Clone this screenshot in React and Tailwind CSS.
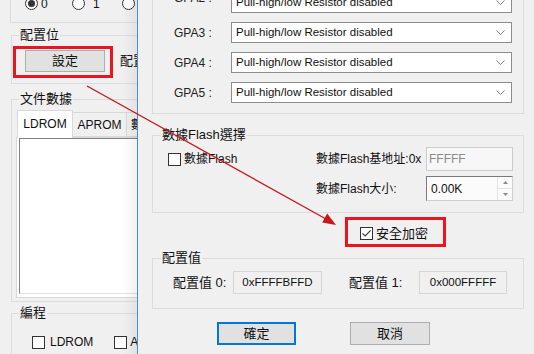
import React from "react";

const FONT = "font-['Liberation_Sans','Noto_Sans_CJK_TC',sans-serif]";

function Legend({ children, className = "" }) {
  return (
    <span
      className={`absolute top-[-9px] px-[1px] bg-[#f0f0f0] text-[13px] leading-[16px] text-[#111] whitespace-nowrap ${className}`}
    >
      {children}
    </span>
  );
}

function Checkbox({ checked }) {
  return (
    <span className="w-[13px] h-[13px] border border-[#333] bg-white flex items-center justify-center shrink-0">
      {checked && (
        <svg width="11" height="11" viewBox="0 0 11 11">
          <path d="M1.5 5.3 L4.2 8 L9.6 2.4" fill="none" stroke="#333" strokeWidth="1.1" />
        </svg>
      )}
    </span>
  );
}

function Radio({ checked }) {
  return (
    <span className="w-[13px] h-[13px] rounded-full border border-[#333] bg-white flex items-center justify-center shrink-0">
      {checked && <span className="w-[7px] h-[7px] rounded-full bg-[#333]" />}
    </span>
  );
}

function Select() {
  return (
    <div className="w-[281px] h-[21px] border border-[#8c8c8c] bg-white flex items-center pl-[4px] pr-[6px] text-[11.5px] text-[#111]">
      <span className="flex-1 whitespace-nowrap">Pull-high/low Resistor disabled</span>
      <svg width="9" height="5" viewBox="0 0 9 5">
        <path d="M0.5 0.5 L4.5 4.5 L8.5 0.5" fill="none" stroke="#808080" strokeWidth="1" />
      </svg>
    </div>
  );
}

function GpaRow({ label, labelClass = "" }) {
  return (
    <div className="flex items-center pl-[21px]">
      <span className={`w-[57px] text-[12px] text-[#222] whitespace-nowrap ${labelClass}`}>{label}</span>
      <Select />
    </div>
  );
}

export default function App() {
  return (
    <div className={`relative w-[534px] h-[354px] overflow-hidden bg-[#f0f0f0] ${FONT} text-[#111]`}>
      {/* Left (main) window */}
      <div className="absolute left-0 top-0 w-[137px] h-[354px] overflow-hidden bg-[#f0f0f0] flex flex-col">
        {/* radio group */}
        <div className="ml-[10px] mt-[-12px] w-[200px] h-[35px] shrink-0 border border-[#dcdcdc] flex items-center pl-[14px] pb-[4px] text-[12px]">
          <div className="w-[47px] flex items-center gap-[3px]">
            <Radio checked />
            <span>0</span>
          </div>
          <div className="w-[50px] flex items-center gap-[8px]">
            <Radio />
            <span>1</span>
          </div>
          <div className="flex items-center gap-[3px]">
            <Radio />
          </div>
        </div>

        {/* 配置位 */}
        <div className="relative ml-[11px] mt-[12px] w-[200px] shrink-0 border border-[#dcdcdc] pt-[14px] pl-[13px] pb-[11px]">
          <Legend className="left-[7px]">配置位</Legend>
          <div className="flex items-center">
            <div className="w-[80px] h-[22px] border border-[#adadad] bg-[#e1e1e1] flex items-center justify-center text-[13px]">
              設定
            </div>
            <span className="ml-[15px] text-[13px] whitespace-nowrap">配置值</span>
          </div>
        </div>

        {/* 文件數據 */}
        <div className="relative ml-[11px] mt-[15px] w-[200px] shrink-0 border border-[#dcdcdc] pt-[10px] pb-[3px]">
          <Legend className="left-[7px]">文件數據</Legend>
          <div className="flex items-start h-[27px] pl-[5px]">
            <div className="relative z-10 w-[56px] h-[28px] bg-white border border-b-0 border-[#d9d9d9] flex items-center justify-center text-[12px] pb-[2px]">
              LDROM
            </div>
            <div className="mt-[2px] w-[54px] h-[25px] bg-[#f0f0f0] border border-l-0 border-[#d9d9d9] flex items-center justify-center text-[12px]">
              APROM
            </div>
            <div className="mt-[2px] w-[54px] h-[25px] bg-[#f0f0f0] border border-l-0 border-[#d9d9d9] flex items-center pl-[4px] text-[12px] whitespace-nowrap">
              數據Flash
            </div>
          </div>
          <div className="ml-[4px] w-[190px] h-[161px] bg-white border border-[#d9d9d9] pl-[2px]">
            <div className="w-[180px] h-[156px] bg-white border-t border-l border-[#828282] border-b border-b-[#e3e3e3]" />
          </div>
        </div>

        {/* 編程 */}
        <div className="relative ml-[11px] mt-[11px] w-[200px] h-[60px] shrink-0 border border-[#dcdcdc] pt-[19px] pl-[20px]">
          <Legend className="left-[7px]">編程</Legend>
          <div className="flex items-center text-[12px]">
            <Checkbox />
            <span className="ml-[5px]">LDROM</span>
            <span className="ml-[21px]">
              <Checkbox />
            </span>
            <span className="ml-[3px]">APROM</span>
          </div>
        </div>

        {/* shadow cast by dialog */}
        <div className="absolute right-0 top-0 w-[14px] h-full bg-gradient-to-r from-transparent to-[rgba(0,0,0,0.06)]" />
      </div>

      {/* Dialog window */}
      <div className="absolute left-[137px] top-0 w-[397px] h-[354px] overflow-hidden border-l border-[#4a8fd6] bg-[#f0f0f0] flex flex-col pl-[14px]">
        {/* GPA group */}
        <div className="mt-[-20px] w-[372px] shrink-0 border border-[#dcdcdc] pt-[11px] pb-[10px] flex flex-col gap-[9px]">
          <GpaRow label="GPA2 :" labelClass="relative top-[-5px]" />
          <GpaRow label="GPA3 :" />
          <GpaRow label="GPA4 :" />
          <GpaRow label="GPA5 :" />
        </div>

        {/* 數據Flash選擇 */}
        <div className="relative mt-[21px] w-[372px] shrink-0 border border-[#dcdcdc] pt-[11px] pb-[11px] flex">
          <Legend className="left-[8px] text-[12px]">數據Flash選擇</Legend>
          <div className="w-[163px] h-[24px] pl-[15px] flex items-center">
            <Checkbox />
            <span className="ml-[3px] text-[12px] whitespace-nowrap">數據Flash</span>
          </div>
          <div className="flex flex-col gap-[5px]">
            <div className="flex items-center h-[24px]">
              <span className="w-[110px] text-[12px] whitespace-nowrap">數據Flash基地址:0x</span>
              <div className="w-[87px] h-[24px] border border-[#cccccc] bg-[#f7f7f7] flex items-center pl-[2px] text-[12px] text-[#8a8a8a]">
                FFFFF
              </div>
            </div>
            <div className="flex items-center h-[25px]">
              <span className="w-[110px] text-[12px] whitespace-nowrap">數據Flash大小:</span>
              <div className="w-[87px] h-[25px] border border-[#7a7a7a] border-r-[#cfcfcf] border-b-[#cfcfcf] bg-[#fbfbfb] flex items-center text-[12px]">
                <span className="flex-1 pl-[4px]">0.00K</span>
                <div className="w-[15px] h-full flex flex-col border-l border-[#e3e3e3]">
                  <div className="flex-1 flex items-center justify-center border-b border-[#e3e3e3]">
                    <svg width="5" height="3" viewBox="0 0 5 3">
                      <path d="M0 3 L2.5 0 L5 3 Z" fill="#8a8a8a" />
                    </svg>
                  </div>
                  <div className="flex-1 flex items-center justify-center">
                    <svg width="5" height="3" viewBox="0 0 5 3">
                      <path d="M0 0 L2.5 3 L5 0 Z" fill="#8a8a8a" />
                    </svg>
                  </div>
                </div>
              </div>
            </div>
          </div>
        </div>

        {/* 安全加密 */}
        <div className="mt-[13px] h-[15px] ml-[208px] flex items-center">
          <Checkbox checked />
          <span className="ml-[3px] text-[13px] whitespace-nowrap">安全加密</span>
        </div>

        {/* 配置值 */}
        <div className="relative mt-[17px] w-[372px] shrink-0 border border-[#dcdcdc] pt-[12px] pb-[14px]">
          <Legend className="left-[8px]">配置值</Legend>
          <div className="flex items-center pl-[20px]">
            <span className="w-[60px] text-[13px] whitespace-nowrap">配置值 0:</span>
            <div className="w-[89px] h-[23px] border border-[#d5d5d5] bg-[#f0f0f0] flex items-center justify-center text-[11.5px]">
              0xFFFFBFFD
            </div>
            <span className="ml-[27px] w-[70px] text-[13px] whitespace-nowrap">配置值 1:</span>
            <div className="w-[88px] h-[23px] border border-[#d5d5d5] bg-[#f0f0f0] flex items-center justify-center text-[11.5px]">
              0x000FFFFF
            </div>
          </div>
        </div>

        {/* buttons */}
        <div className="mt-[13px] flex pl-[65px] gap-[54px]">
          <div className="w-[79px] h-[23px] border-2 border-[#0078d7] bg-[#e1e1e1] flex items-center justify-center text-[13px]">
            確定
          </div>
          <div className="w-[80px] h-[23px] border border-[#adadad] bg-[#e1e1e1] flex items-center justify-center text-[13px]">
            取消
          </div>
        </div>
      </div>

      {/* Annotations */}
      <div className="absolute left-[13px] top-[46px] w-[100px] h-[32px] border-[3px] border-[#e8161e]" />
      <div className="absolute left-[345px] top-[217px] w-[101px] h-[30px] border-[3px] border-[#e8161e]" />
      <svg className="absolute left-0 top-0" width="534" height="354" viewBox="0 0 534 354">
        <line x1="87" y1="86" x2="326" y2="219" stroke="#c8161d" strokeWidth="1.4" />
        <path d="M336 225 L322.2 222.6 L327.2 213.6 Z" fill="#c8161d" />
      </svg>
    </div>
  );
}
